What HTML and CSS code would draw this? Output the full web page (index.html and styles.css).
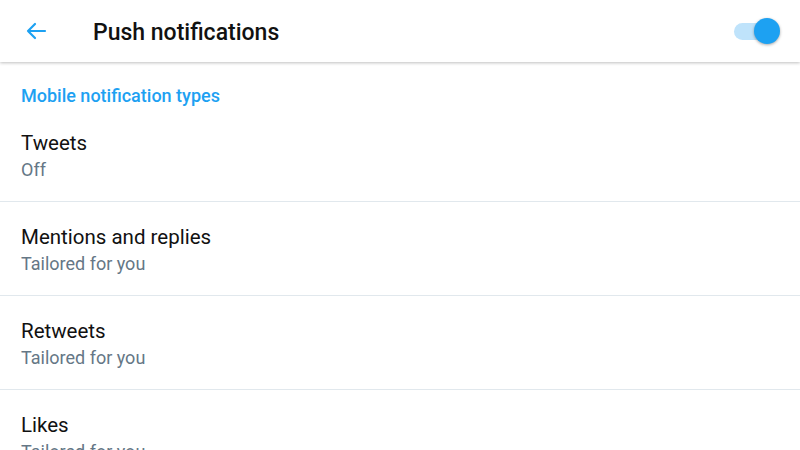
FILE: index.html
```html
<!DOCTYPE html>
<html>
<head>
<meta charset="utf-8">
<link rel="stylesheet" href="styles.css">
</head>
<body>
<header class="bar">
  <svg class="back" width="24" height="24" viewBox="0 0 24 24"><path d="M21 12H4M11 5l-7 7 7 7" fill="none" stroke="#1DA1F2" stroke-width="2.2" stroke-linecap="round" stroke-linejoin="round"/></svg>
  <h1 class="title">Push notifications</h1>
  <div class="switch"><div class="track"></div><div class="thumb"></div></div>
</header>
<main>
  <div class="section">Mobile notification types</div>
  <div class="row"><div class="row-title">Tweets</div><div class="row-sub">Off</div></div>
  <div class="row"><div class="row-title">Mentions and replies</div><div class="row-sub">Tailored for you</div></div>
  <div class="row"><div class="row-title">Retweets</div><div class="row-sub">Tailored for you</div></div>
  <div class="row"><div class="row-title">Likes</div><div class="row-sub">Tailored for you</div></div>
</main>
</body>
</html>
```
FILE: styles.css
```css
html, body { margin: 0; padding: 0; background: #fff; overflow: hidden; }
body { font-family: Roboto, "Noto Sans", sans-serif; width: 800px; height: 450px; }
.bar {
  height: 62px;
  display: flex;
  align-items: center;
  padding: 0 20px 0 24px;
  box-shadow: 0 1px 3px rgba(0,0,0,0.25);
  position: relative;
  z-index: 1;
  background: #fff;
}
.back { width: 24px; height: 24px; flex: none; }
.title { margin: 2px 0 0 45px; font-size: 23px; font-weight: 500; color: #111; flex: 1; }
.switch { position: relative; width: 46px; height: 28px; }
.track { position: absolute; left: 0; top: 6px; width: 34px; height: 17px; border-radius: 9px; background: #BFE3FB; }
.thumb { position: absolute; right: 0; top: 1px; width: 26px; height: 26px; border-radius: 50%; background: #1DA1F2; box-shadow: 0 1px 3px rgba(0,0,0,0.35); }
.section { padding: 24px 21px 2px; font-size: 18px; line-height: 20px; font-weight: 500; color: #1DA1F2; }
.row { padding: 22px 21px 18px; border-bottom: 1px solid #E1E8ED; }
.row-title { font-size: 20.5px; line-height: 26px; color: #111; }
.row-sub { font-size: 18px; line-height: 26px; padding-top: 1px; color: #657786; }
```
